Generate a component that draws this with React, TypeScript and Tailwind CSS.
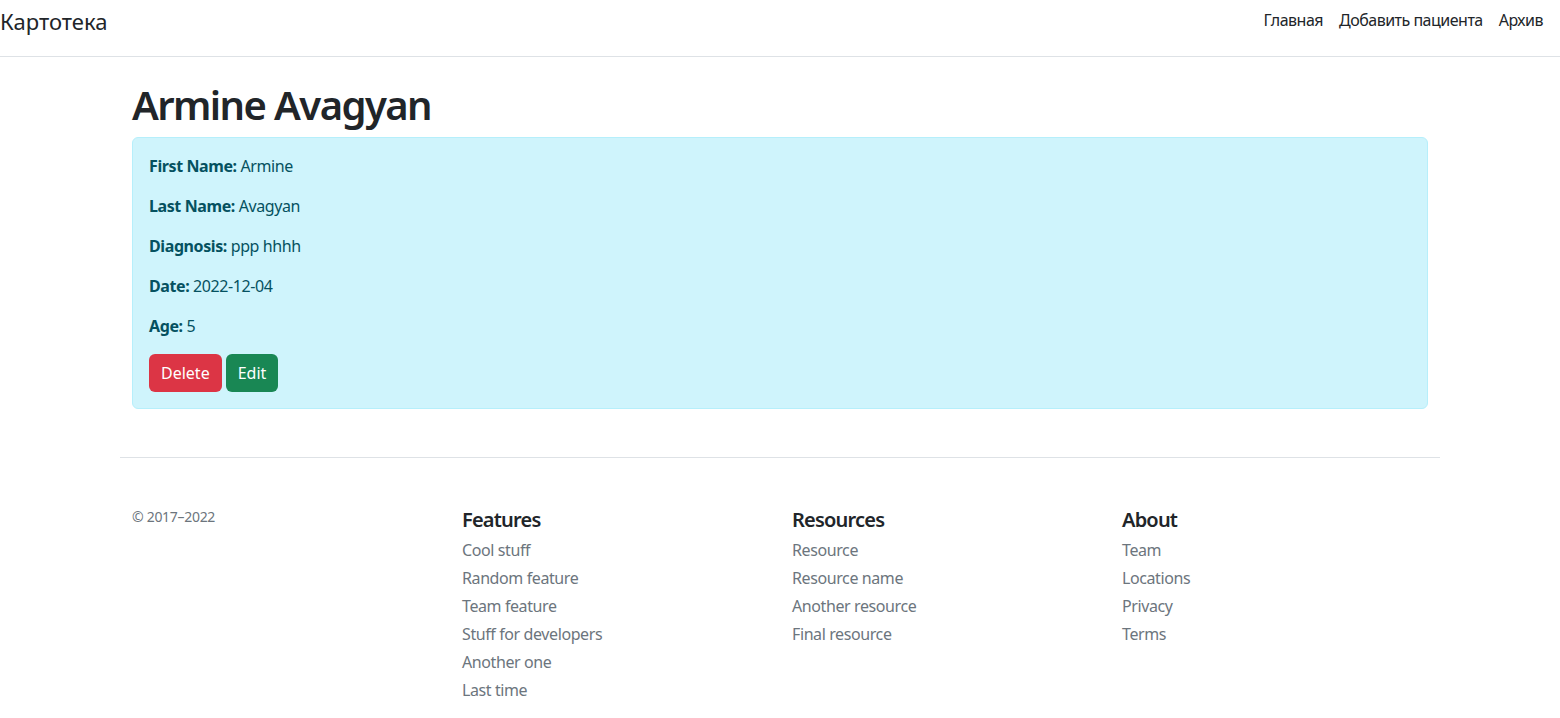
const font = { fontFamily: '"Segoe UI", "Noto Sans", "Liberation Sans", sans-serif' };

const patient = [
  { label: "First Name:", value: "Armine" },
  { label: "Last Name:", value: "Avagyan" },
  { label: "Diagnosis:", value: "ppp hhhh" },
  { label: "Date:", value: "2022-12-04" },
  { label: "Age:", value: "5" },
];

const footerCols = [
  {
    title: "Features",
    links: ["Cool stuff", "Random feature", "Team feature", "Stuff for developers", "Another one", "Last time"],
  },
  { title: "Resources", links: ["Resource", "Resource name", "Another resource", "Final resource"] },
  { title: "About", links: ["Team", "Locations", "Privacy", "Terms"] },
];

function Navbar() {
  return (
    <header className="flex h-14 items-start justify-between border-b border-[#dee2e6] bg-white box-content">
      <a className="pt-[6px] text-[22px] leading-[30px] text-[#212529]">Картотека</a>
      <nav className="flex pt-[8px] pr-[9px]">
        {["Главная", "Добавить пациента", "Архив"].map((l) => (
          <a key={l} className="px-2 text-base leading-6 tracking-[-0.5px] text-[#212529]">
            {l}
          </a>
        ))}
      </nav>
    </header>
  );
}

function PatientCard() {
  return (
    <div className="rounded-md border border-[#b6effb] bg-[#cff4fc] p-4 tracking-[-0.4px] text-[#055160]">
      {patient.map((p) => (
        <p key={p.label} className="mb-4 text-base leading-6">
          <b className="font-bold">{p.label}</b> {p.value}
        </p>
      ))}
      <div className="flex gap-1 tracking-normal">
        <button className="rounded-md bg-[#dc3545] px-3 py-[7px] text-base leading-6 text-white">Delete</button>
        <button className="rounded-md bg-[#198754] px-3 py-[7px] text-base leading-6 text-white">Edit</button>
      </div>
    </div>
  );
}

function Footer() {
  return (
    <footer className="mx-[120px] my-12 grid grid-cols-4 border-t border-[#dee2e6] py-12">
      <div className="px-3">
        <small className="block text-sm leading-[21px] tracking-[-0.3px] text-[#6c757d]">© 2017–2022</small>
      </div>
      {footerCols.map((c) => (
        <div key={c.title} className="px-3">
          <h5 className="mb-[6px] pt-[2px] text-xl font-semibold leading-6 tracking-[-0.8px] text-[#212529]">{c.title}</h5>
          <ul>
            {c.links.map((l) => (
              <li key={l} className="mb-1 text-base leading-6 tracking-[-0.4px] text-[#6c757d]">
                {l}
              </li>
            ))}
          </ul>
        </div>
      ))}
    </footer>
  );
}

export default function App() {
  return (
    <div className="min-h-screen bg-white text-[#212529]" style={font}>
      <Navbar />
      <main className="mx-auto mt-6 w-[1320px] px-3">
        <h1 className="mb-2 text-[40px] font-semibold leading-[48px] tracking-[-1.6px]">Armine Avagyan</h1>
        <PatientCard />
      </main>
      <Footer />
    </div>
  );
}
